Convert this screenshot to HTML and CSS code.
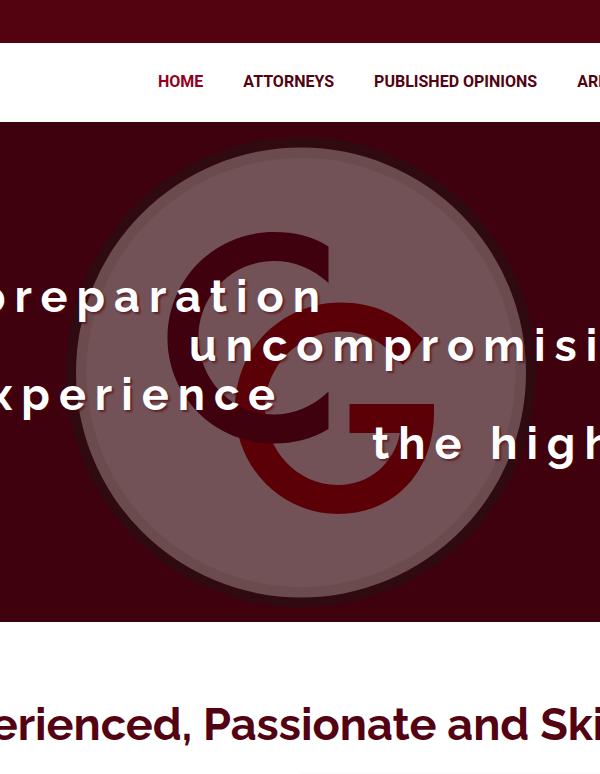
FILE: index.html
```html
<!DOCTYPE html>
<html lang="en">
<head>
<meta charset="utf-8">
<meta name="viewport" content="width=device-width, initial-scale=1">
<title>Home</title>
<link rel="stylesheet" href="styles.css">
</head>
<body>
<div class="topbar"></div>
<header class="header">
  <nav class="nav">
    <a class="nav-link active" href="#">HOME</a>
    <a class="nav-link" href="#">ATTORNEYS</a>
    <a class="nav-link" href="#">PUBLISHED OPINIONS</a>
    <a class="nav-link" href="#">AREAS</a>
  </nav>
</header>
<main>
  <section class="hero">
    <svg class="seal" viewBox="0 0 600 500" aria-hidden="true">
      <circle cx="301" cy="250" r="235" fill="#2f0b11"/>
      <circle cx="301" cy="250.500" r="225" fill="#6c4b4f"/>
      <circle cx="301" cy="250.500" r="214.500" fill="#735257"/>
      <path fill="#5c0008" d="M423 217C399 192 373 180.500 341 180.500C281 180.500 235 228 235 286C235 345 281 392 338 392C395 392 434 349 434 291V282H349.500V311H400C394 342 369 363 338 363C297 363 265 328 265 286C265 244 299 209.500 341 209.500C366 209.500 385 221 403 243Z"/>
      <path fill="#3f010d" d="M328.500 124.500C312 114 294 110 274 110C214 110 167.500 158 167.500 216C167.500 274 214 321.500 274 321.500C294 321.500 312 317 328.500 307V269.500C312 285 294 292.500 274 292.500C231 292.500 198.500 257 198.500 215C198.500 174 231 139 274 139C294 139 312 146 328.500 161Z"/>
    </svg>
    <div class="slogans">
      <p class="slogan ends-middle">preparation</p>
      <p class="slogan starts-left">uncompromising</p>
      <p class="slogan ends-left">experience</p>
      <p class="slogan starts-middle">the highest</p>
    </div>
  </section>
  <section class="intro">
    <h1 class="title">Experienced, Passionate and Skilled</h1>
    <div class="rule"></div>
  </section>
</main>
</body>
</html>
```
FILE: styles.css
```css
* { box-sizing: border-box; }
body {
  margin: 0;
  overflow-x: hidden;
  background: #fff;
  color: #530311;
  font-family: Roboto, "Liberation Sans", sans-serif;
}
.topbar { height: 43px; background: #530210; }
.header { padding: 27px 0 28px 158px; overflow: hidden; }
.nav { display: flex; gap: 40px; }
.nav-link {
  flex: none;
  color: #530311;
  font-size: 16px;
  font-weight: 700;
  line-height: 24px;
  text-decoration: none;
}
.nav-link.active { color: #94001e; }
.hero {
  display: grid;
  align-items: center;
  overflow: hidden;
  background: #3f010d;
}
.seal, .slogans { grid-area: 1 / 1; min-width: 0; }
.seal { display: block; width: 100%; height: 500px; }
.slogans { padding-bottom: 4px; }
.slogan {
  display: flex;
  margin: 0;
  color: #fff;
  font-family: Raleway, Lato, sans-serif;
  font-size: 45px;
  font-weight: 700;
  line-height: 49px;
  letter-spacing: 9px;
  white-space: nowrap;
  text-shadow: 2px 2px 2px rgba(83, 3, 17, 0.6);
}
.ends-middle { justify-content: flex-end; width: calc(50% + 29px); }
.ends-left { justify-content: flex-end; width: calc(50% - 16px); }
.starts-left { padding-left: calc(50% - 111px); }
.starts-middle { padding-left: 62%; }
.intro { padding-top: 76px; overflow: hidden; }
.title {
  display: flex;
  justify-content: center;
  margin: 0;
  font-family: Raleway, Lato, sans-serif;
  font-size: 45px;
  font-weight: 700;
  line-height: 54px;
  white-space: nowrap;
}
.rule { width: 50%; margin: 20px 0 0 auto; border-top: 2px solid #fcfcfc; }
```
